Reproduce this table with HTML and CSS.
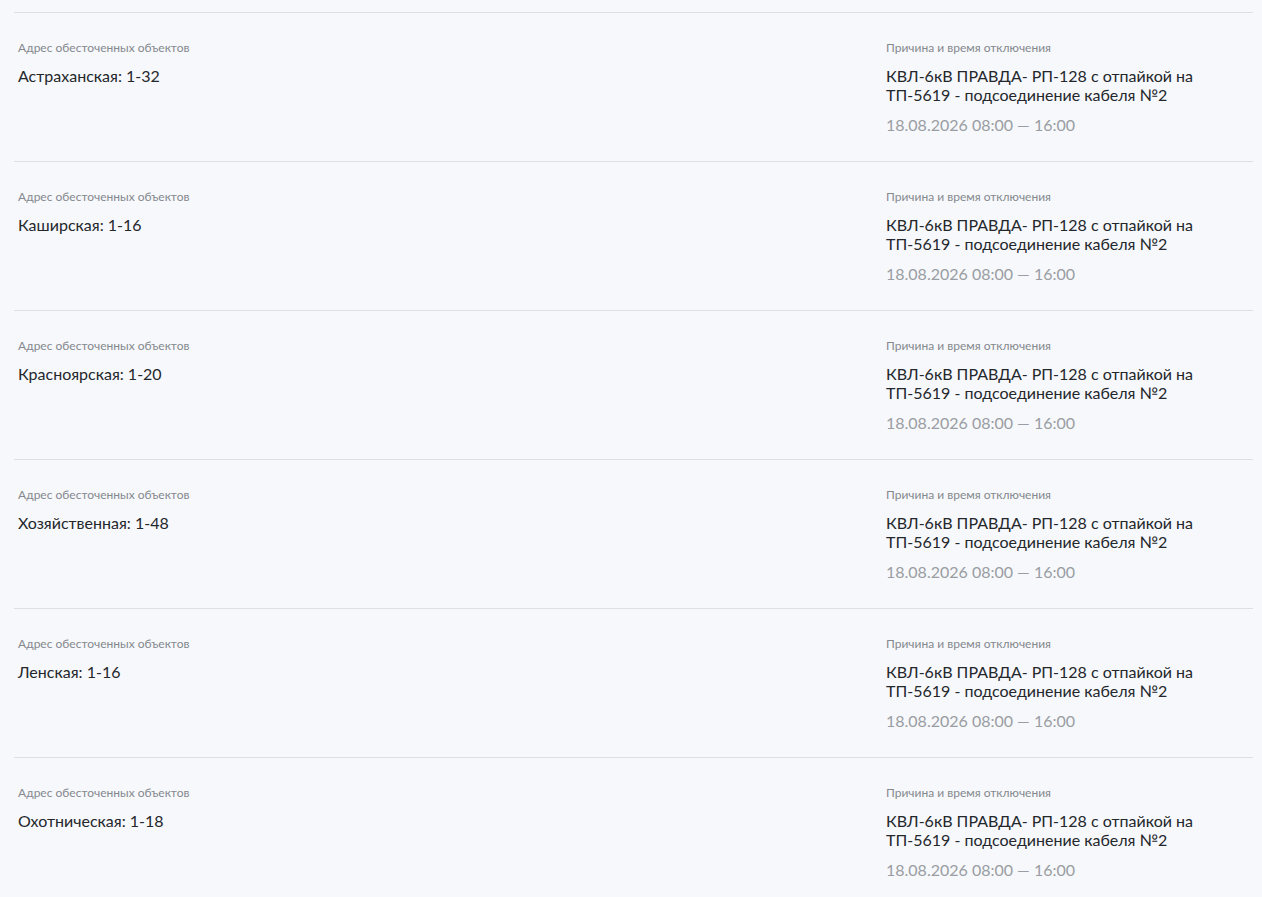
FILE: index.html
```html
<!DOCTYPE html>
<html lang="ru">
<head>
<meta charset="utf-8">
<link rel="stylesheet" href="styles.css">
</head>
<body>
<div class="list">
  <div class="row">
    <div class="col-addr"><div class="label">Адрес обесточенных объектов</div><div class="value">Астраханская: 1-32</div></div>
    <div class="col-reason"><div class="label">Причина и время отключения</div><div class="value">КВЛ-6кВ ПРАВДА- РП-128 с отпайкой на ТП-5619 - подсоединение кабеля №2</div><div class="time">18.08.2026 08:00 — 16:00</div></div>
  </div>
  <div class="row">
    <div class="col-addr"><div class="label">Адрес обесточенных объектов</div><div class="value">Каширская: 1-16</div></div>
    <div class="col-reason"><div class="label">Причина и время отключения</div><div class="value">КВЛ-6кВ ПРАВДА- РП-128 с отпайкой на ТП-5619 - подсоединение кабеля №2</div><div class="time">18.08.2026 08:00 — 16:00</div></div>
  </div>
  <div class="row">
    <div class="col-addr"><div class="label">Адрес обесточенных объектов</div><div class="value">Красноярская: 1-20</div></div>
    <div class="col-reason"><div class="label">Причина и время отключения</div><div class="value">КВЛ-6кВ ПРАВДА- РП-128 с отпайкой на ТП-5619 - подсоединение кабеля №2</div><div class="time">18.08.2026 08:00 — 16:00</div></div>
  </div>
  <div class="row">
    <div class="col-addr"><div class="label">Адрес обесточенных объектов</div><div class="value">Хозяйственная: 1-48</div></div>
    <div class="col-reason"><div class="label">Причина и время отключения</div><div class="value">КВЛ-6кВ ПРАВДА- РП-128 с отпайкой на ТП-5619 - подсоединение кабеля №2</div><div class="time">18.08.2026 08:00 — 16:00</div></div>
  </div>
  <div class="row">
    <div class="col-addr"><div class="label">Адрес обесточенных объектов</div><div class="value">Ленская: 1-16</div></div>
    <div class="col-reason"><div class="label">Причина и время отключения</div><div class="value">КВЛ-6кВ ПРАВДА- РП-128 с отпайкой на ТП-5619 - подсоединение кабеля №2</div><div class="time">18.08.2026 08:00 — 16:00</div></div>
  </div>
  <div class="row">
    <div class="col-addr"><div class="label">Адрес обесточенных объектов</div><div class="value">Охотническая: 1-18</div></div>
    <div class="col-reason"><div class="label">Причина и время отключения</div><div class="value">КВЛ-6кВ ПРАВДА- РП-128 с отпайкой на ТП-5619 - подсоединение кабеля №2</div><div class="time">18.08.2026 08:00 — 16:00</div></div>
  </div>
</div>
</body>
</html>
```
FILE: styles.css
```css
html, body {
  margin: 0;
  padding: 0;
  background: #f6f8fc;
}
body {
  font-family: Lato, "Liberation Sans", sans-serif;
  color: #222529;
}
.list {
  margin: 12px 9px 0 14px;
}
.row {
  border-top: 1px solid #dcdfe4;
  display: grid;
  grid-template-columns: 1fr 363px;
  gap: 16px;
  padding: 27px 4px 0 4px;
  height: 149px;
  box-sizing: border-box;
}
.label {
  font-size: 12px;
  line-height: 15px;
  color: #85888d;
}
.value {
  font-size: 16px;
  line-height: 19px;
  margin-top: 11px;
  color: #24272b;
}
.col-reason .value {
  max-width: 340px;
}
.time {
  font-size: 16px;
  line-height: 19px;
  margin-top: 11px;
  color: #9a9da2;
}
```
